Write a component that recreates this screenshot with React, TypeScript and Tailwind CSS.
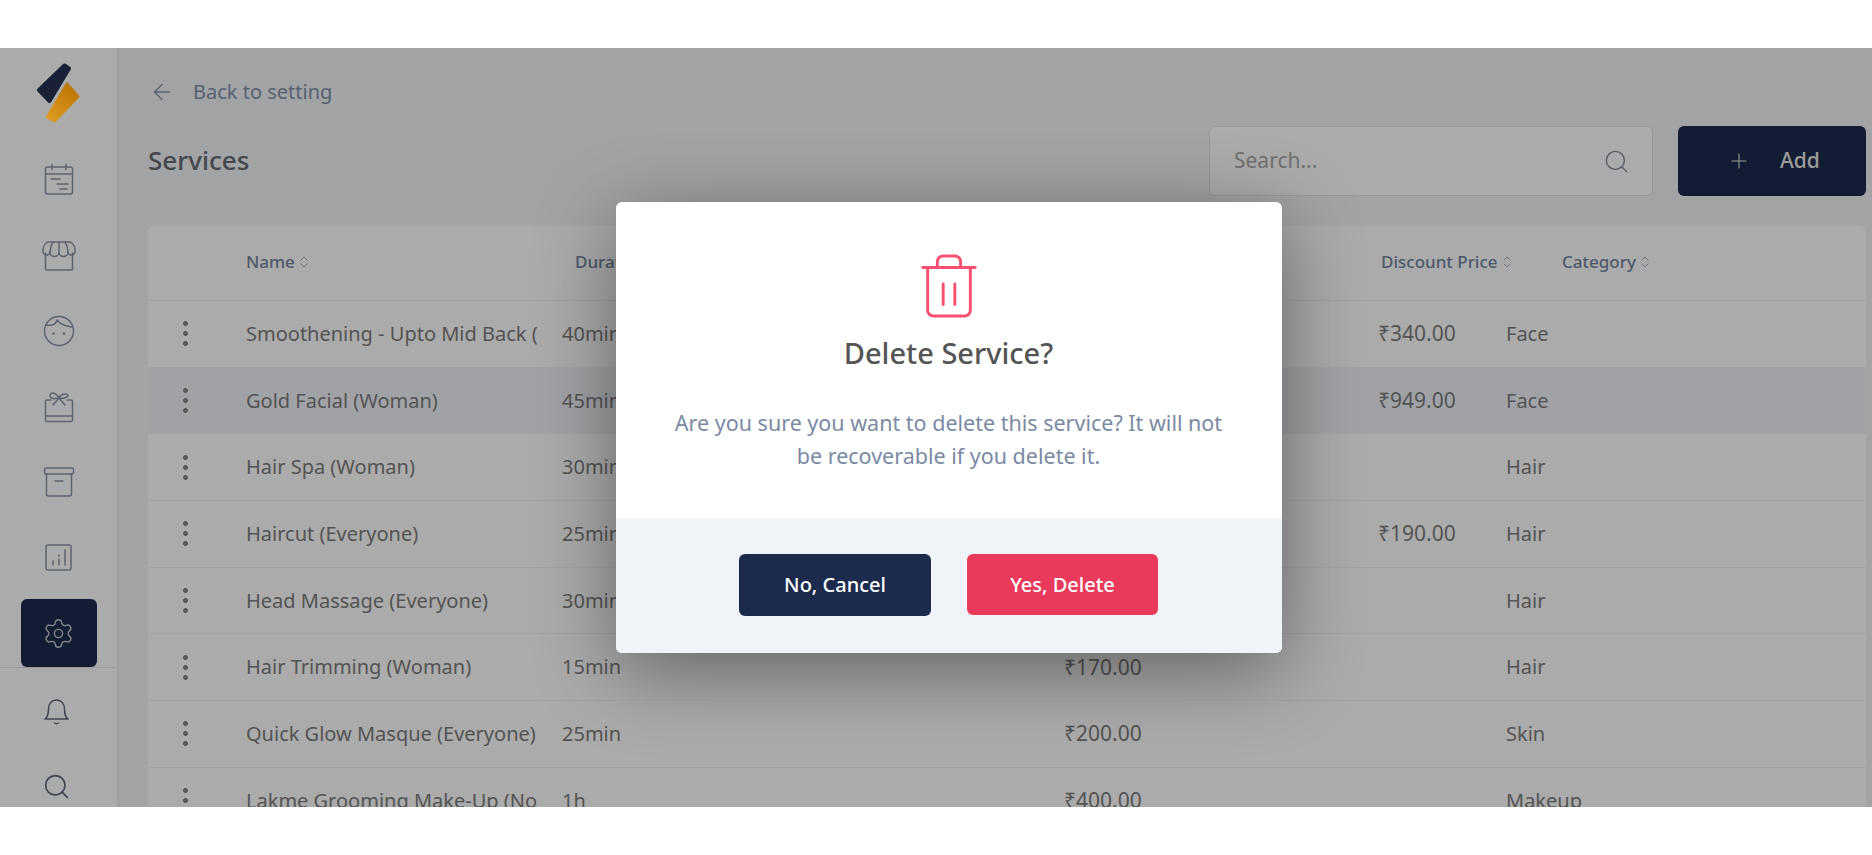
import {ArrowLeft, Plus, Search, Settings} from "lucide-react";

const rows = [
    {name: "Smoothening - Upto Mid Back (", duration: "40min", price: "", discount: "₹340.00", category: "Face"},
    {name: "Gold Facial (Woman)", duration: "45min", price: "", discount: "₹949.00", category: "Face", active: true},
    {name: "Hair Spa (Woman)", duration: "30min", price: "", discount: "", category: "Hair"},
    {name: "Haircut (Everyone)", duration: "25min", price: "", discount: "₹190.00", category: "Hair"},
    {name: "Head Massage (Everyone)", duration: "30min", price: "", discount: "", category: "Hair"},
    {name: "Hair Trimming (Woman)", duration: "15min", price: "₹170.00", discount: "", category: "Hair"},
    {name: "Quick Glow Masque (Everyone)", duration: "25min", price: "₹200.00", discount: "", category: "Skin"},
    {name: "Lakme Grooming Make-Up (No", duration: "1h", price: "₹400.00", discount: "", category: "Makeup"},
];

function Logo() {
    return (
        <svg width="46" height="63" viewBox="0 0 46 63">
            <defs>
                <linearGradient id="logoOrange" x1="0.2" y1="1" x2="0.8" y2="0.1">
                    <stop offset="0" stopColor="#dc9a1e" />
                    <stop offset="1" stopColor="#bd7604" />
                </linearGradient>
            </defs>
            <path
                d="M28.500 3.500 L33 6.500 L13.500 39 L3 28 Z"
                fill="#1a2035"
                stroke="#1a2035"
                strokeWidth="4"
                strokeLinejoin="round"
            />
            <path
                d="M31 22 L42 34.500 L18.500 59 L11.500 55 Z"
                fill="url(#logoOrange)"
                stroke="url(#logoOrange)"
                strokeWidth="3"
                strokeLinejoin="round"
            />
        </svg>
    );
}

function NavIcon({children}: {children: React.ReactNode}) {
    return (
        <svg
            width="34"
            height="34"
            viewBox="0 0 34 34"
            fill="none"
            stroke="currentColor"
            strokeWidth="1.5"
            strokeLinecap="round"
            strokeLinejoin="round"
        >
            {children}
        </svg>
    );
}

const navIcons = [
    <NavIcon key="calendar">
        <rect x="3.500" y="4" width="27" height="27" rx="2" />
        <path d="M3.500 11h27M10 1.500v5M24 1.500v5M9 16h9M15 21h11M18 26h7" />
    </NavIcon>,
    <NavIcon key="store">
        <path d="M3.500 14v16a1 1 0 0 0 1 1h25a1 1 0 0 0 1-1V14" />
        <path d="M6 3h22c3 1 5 5 5 9a3.500 3.500 0 0 1-7 1 4.500 4.500 0 0 1-9 0 4.500 4.500 0 0 1-9 0 3.500 3.500 0 0 1-7-1C1 8 3 4 6 3Z" />
        <path d="M11 3c-2 3-3 6-3 10M17 3v10M23 3c2 3 3 6 3 10" />
    </NavIcon>,
    <NavIcon key="face">
        <circle cx="17" cy="17" r="14.500" />
        <path d="M4 11c6 1 10-1 11-5 3 4 8 6 15 7" />
        <circle cx="11.500" cy="19.500" r="1.300" fill="currentColor" stroke="none" />
        <circle cx="22" cy="19.500" r="1.300" fill="currentColor" stroke="none" />
    </NavIcon>,
    <NavIcon key="gift">
        <path d="M9 10H5a1.500 1.500 0 0 0-1.500 1.500V30A1.500 1.500 0 0 0 5 31.500h24a1.500 1.500 0 0 0 1.500-1.500V11.500A1.500 1.500 0 0 0 29 10h-4" />
        <path d="M3.500 26h27" />
        <path d="M17 8c-3-6-9-6-9-2.500S13 9 17 8c4 1 9-1 9-2.500S20 2 17 8Z" />
        <path d="M17 8l-6 7M17 8l6 7" />
    </NavIcon>,
    <NavIcon key="archive">
        <rect x="2.500" y="3" width="29" height="6" rx="1.500" />
        <path d="M4.500 9v20a2 2 0 0 0 2 2h21a2 2 0 0 0 2-2V9M13 16h8" />
    </NavIcon>,
    <NavIcon key="chart">
        <rect x="4" y="4" width="25" height="25" rx="2" />
        <path d="M11 20v4M17 18v6M17 14v1M23 9v15" />
    </NavIcon>,
];

function SortIcon() {
    return (
        <svg width="8" height="14" viewBox="0 0 8 14" fill="none" stroke="#a0a8b8" strokeWidth="1" strokeLinecap="round" className="ml-[5px]">
            <path d="M1 5l3-3 3 3M1 9l3 3 3-3" />
        </svg>
    );
}

function HeaderCell({label}: {label: string}) {
    return (
        <div className="flex items-center text-[17px] font-medium text-[#76859e]">
            {label}
            <SortIcon />
        </div>
    );
}

export default function App() {
    return (
        <div
            className="flex h-screen w-full flex-col overflow-hidden bg-white pt-[48px]"
            style={{fontFamily: '"Noto Sans", sans-serif'}}
        >
            <div className="relative flex h-[759px] overflow-hidden bg-[#f2f3f6]">
                <aside className="flex w-[118px] shrink-0 flex-col border-r border-[#e8e9ec] bg-white">
                    <div className="relative z-10 flex h-[98px] shrink-0 justify-center pt-[14px] pl-[1px]">
                        <Logo />
                    </div>
                    <nav className="flex flex-col items-center gap-[7.500px] text-[#8a95a8]">
                        {navIcons.map((icon, i) => (
                            <div key={i} className="flex h-[68px] w-[76px] items-center justify-center">
                                {icon}
                            </div>
                        ))}
                        <div className="flex h-[68px] w-[76px] items-center justify-center rounded-md bg-[#1c2b4d]">
                            <Settings size={33} strokeWidth={1} className="text-[#c4c8d0]" />
                        </div>
                    </nav>
                    <div className="flex flex-col items-center border-t border-[#e8e9ec] pt-[3px] text-[#5b6577]">
                        <div className="flex h-[77px] items-center justify-center pr-[4px]">
                            <svg width="30" height="30" viewBox="0 0 30 30" fill="none" stroke="currentColor" strokeWidth="1.500" strokeLinecap="round" strokeLinejoin="round">
                                <path d="M3 24h23c-3-2-3.500-5-3.500-10 0-5-3-9-8-9s-8 4-8 9c0 5-.5 8-3.500 10Z" />
                                <path d="M12.500 28c1.200.8 2.800.8 4 0" />
                            </svg>
                        </div>
                        <div className="flex h-[77px] items-center justify-center pr-[4px]">
                            <Search size={29} strokeWidth={1.4} />
                        </div>
                    </div>
                </aside>

                <main className="min-w-0 flex-1 pl-[30px] pr-[6px]">
                    <div className="mt-[28px] flex h-[32px] items-center pl-[1px] text-[20px] text-[#8391a6]">
                        <ArrowLeft size={26} strokeWidth={1.2} />
                        <span className="ml-[18px]">Back to setting</span>
                    </div>
                    <div className="mt-[18px] flex h-[70px] items-center justify-between">
                        <h1 className="pb-[2px] text-[26px] font-medium text-[#666a70]">Services</h1>
                        <div className="flex gap-[25px]">
                            <div className="flex h-[70px] w-[444px] items-center justify-between rounded-md border border-[#e2e4e8] bg-white pl-[24px] pr-[22px] text-[21px] text-[#a8a8a8]">
                                Search...
                                <Search size={27} strokeWidth={1.2} className="text-[#7d8593]" />
                            </div>
                            <div className="flex h-[70px] w-[188px] items-center rounded-md bg-[#1c2b4d] pl-[49px] text-[21px] font-medium text-[#e8e8e8]">
                                <Plus size={24} strokeWidth={1.1} />
                                <span className="ml-[29px]">Add</span>
                            </div>
                        </div>
                    </div>
                    <div className="mt-[30px] rounded-md bg-white">
                        <div className="grid h-[75px] grid-cols-[98px_329px_806px_181px_1fr] items-center border-b border-[#f0f1f5] pb-[3px]">
                            <div />
                            <HeaderCell label="Name" />
                            <HeaderCell label="Duration" />
                            <HeaderCell label="Discount Price" />
                            <HeaderCell label="Category" />
                        </div>
                        {rows.map((row) => (
                            <div
                                key={row.name}
                                className={`grid h-[66.700px] grid-cols-[98px_316px_502px_315px_127px_1fr] items-center border-b border-[#f3f4f6] text-[20px] text-[#7d7d7d] ${row.active ? "bg-[#f0f2f7]" : ""}`}
                            >
                                <div className="flex flex-col items-center gap-[5px] pl-[1px] pr-[24px]">
                                    <span className="h-[5px] w-[5px] rounded-full border border-[#6f6f6f] bg-[#8d8d8d]" />
                                    <span className="h-[5px] w-[5px] rounded-full border border-[#6f6f6f] bg-[#8d8d8d]" />
                                    <span className="h-[5px] w-[5px] rounded-full border border-[#6f6f6f] bg-[#8d8d8d]" />
                                </div>
                                <div className="whitespace-nowrap">{row.name}</div>
                                <div>{row.duration}</div>
                                <div className="text-[21px]">{row.price}</div>
                                <div className="-ml-[1px] text-[21px]">{row.discount}</div>
                                <div>{row.category}</div>
                            </div>
                        ))}
                    </div>
                </main>
            </div>

            <div className="absolute inset-x-0 top-[48px] h-[759px] bg-black/33" />

            <div className="absolute inset-0 flex items-center justify-center pl-[25px]">
                <div className="w-[666px] overflow-hidden rounded-md bg-white shadow-[0_18px_80px_rgba(0,0,0,0.42)]">
                    <div className="flex h-[316px] flex-col items-center pt-[52px]">
                        <svg width="58" height="64" viewBox="0 0 58 66" fill="none" stroke="#f9506f" strokeWidth="3" strokeLinecap="round" strokeLinejoin="round">
                            <path d="M2 14h54" />
                            <path d="M7 14v44a6 6 0 0 0 6 6h32a6 6 0 0 0 6-6V14" />
                            <path d="M17 14V8a6 6 0 0 1 6-6h12a6 6 0 0 1 6 6v6" />
                            <path d="M23 31v21M35 31v21" />
                        </svg>
                        <h2 className="mt-[13px] text-[29px] font-medium text-[#555555]">Delete Service?</h2>
                        <p className="mt-[31px] w-[560px] text-center text-[21.500px] leading-[33px] text-[#7b8aa3]">
                            Are you sure you want to delete this service? It will not be recoverable if you delete it.
                        </p>
                    </div>
                    <div className="flex h-[135px] items-center justify-center gap-[36px] bg-[#f0f3f8] pb-[2px]">
                        <button className="h-[62px] w-[192px] rounded-md bg-[#1c2b4d] text-[20px] font-medium text-white">No, Cancel</button>
                        <button className="h-[61px] w-[191px] rounded-md bg-[#e93a5c] text-[20px] font-medium text-white">Yes, Delete</button>
                    </div>
                </div>
            </div>
        </div>
    );
}
